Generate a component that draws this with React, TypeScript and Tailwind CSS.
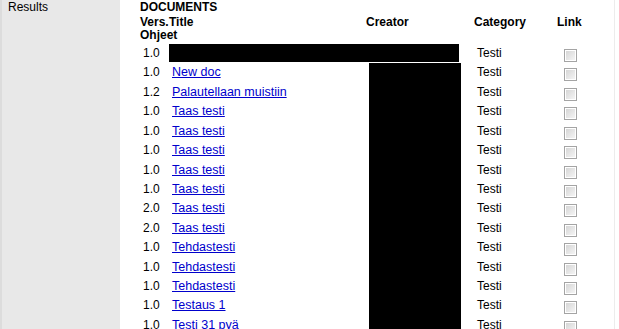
const rows: { vers: string; title: string | null }[] = [
  { vers: "1.0", title: null },
  { vers: "1.0", title: "New doc" },
  { vers: "1.2", title: "Palautellaan muistiin" },
  { vers: "1.0", title: "Taas testi" },
  { vers: "1.0", title: "Taas testi" },
  { vers: "1.0", title: "Taas testi" },
  { vers: "1.0", title: "Taas testi" },
  { vers: "1.0", title: "Taas testi" },
  { vers: "2.0", title: "Taas testi" },
  { vers: "2.0", title: "Taas testi" },
  { vers: "1.0", title: "Tehdastesti" },
  { vers: "1.0", title: "Tehdastesti" },
  { vers: "1.0", title: "Tehdastesti" },
  { vers: "1.0", title: "Testaus 1" },
  { vers: "1.0", title: "Testi 31 pyä" },
];

function Checkbox() {
  return (
    <span className="mt-[5px] block h-[13px] w-[13px] border border-[#a4a4a4] bg-white p-[1px]">
      <span className="block h-full w-full bg-gradient-to-br from-[#d6d6d6] to-[#f4f4f4]" />
    </span>
  );
}

export default function App() {
  return (
    <div className="flex h-[329px] w-[619px] overflow-hidden bg-white font-['Liberation_Sans',Arial,sans-serif] text-[12px] text-black">
      <div className="w-[120px] shrink-0 border-l-2 border-[#dcdcdc] bg-[#e8e8e8] pl-[6px] leading-[14px]">
        Results
      </div>

      <div className="w-[495px] shrink-0 border-r border-[#ececec] pl-[20px]">
        <div className="h-[14px] font-bold leading-[14px]">DOCUMENTS</div>

        <div className="flex h-[15px] items-center font-bold">
          <div className="w-[29px]">Vers.</div>
          <div className="w-[197px]">Title</div>
          <div className="w-[108px]">Creator</div>
          <div className="w-[83px]">Category</div>
          <div>Link</div>
        </div>

        <div className="h-[15px] font-bold leading-[13px]">Ohjeet</div>

        {rows.map((row, i) => (
          <div key={i} className="flex h-[19.43px] leading-[19.43px]">
            <div className="w-[29px] pl-[3px]">{row.vers}</div>
            {row.title === null ? (
              <div className="w-[305px]">
                <div className="h-[18px] w-[290px] bg-black" />
              </div>
            ) : (
              <>
                <div className="w-[197px] pl-[3px]">
                  <a href="#" className="text-[12.5px] text-[#0000cc] underline">
                    {row.title}
                  </a>
                </div>
                <div className="w-[108px] pl-[3px]">
                  <div className="h-full w-[92px] bg-black" />
                </div>
              </>
            )}
            <div className="w-[83px] pl-[3px]">Testi</div>
            <div className="pl-[7px]">
              <Checkbox />
            </div>
          </div>
        ))}
      </div>
    </div>
  );
}
